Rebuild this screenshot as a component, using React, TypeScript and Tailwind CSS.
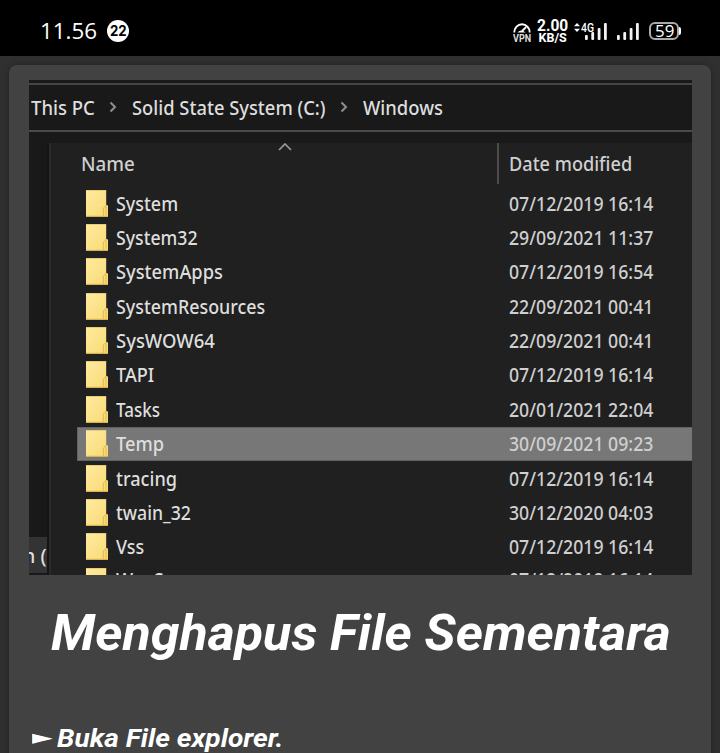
import { useLayoutEffect, useRef, useState, type ReactNode } from "react";

type FitProps = { width: number; className?: string; children: ReactNode };

// Condenses or widens a single line of text so it fills the given width.
function Fit({ width, className = "", children }: FitProps) {
  const ref = useRef<HTMLSpanElement>(null);
  const [scale, setScale] = useState(1);
  useLayoutEffect(() => {
    if (ref.current) setScale(width / ref.current.offsetWidth);
  }, [width]);
  return (
    <span className={`block shrink-0 whitespace-nowrap ${className}`} style={{ width }}>
      <span ref={ref} className="inline-block origin-left" style={{ transform: `scaleX(${scale})` }}>
        {children}
      </span>
    </span>
  );
}

const rows = [
  { name: "System", width: 62, date: "07/12/2019 16:14" },
  { name: "System32", width: 82, date: "29/09/2021 11:37" },
  { name: "SystemApps", width: 107, date: "07/12/2019 16:54" },
  { name: "SystemResources", width: 149, date: "22/09/2021 00:41" },
  { name: "SysWOW64", width: 99, date: "22/09/2021 00:41" },
  { name: "TAPI", width: 38, date: "07/12/2019 16:14" },
  { name: "Tasks", width: 44, date: "20/01/2021 22:04" },
  { name: "Temp", width: 48, date: "30/09/2021 09:23", selected: true },
  { name: "tracing", width: 61, date: "07/12/2019 16:14" },
  { name: "twain_32", width: 75, date: "30/12/2020 04:03" },
  { name: "Vss", width: 28, date: "07/12/2019 16:14" },
  { name: "WaaS", width: 48, date: "07/12/2019 16:14" },
];

function Folder() {
  return (
    <svg viewBox="0 0 22 27" className="h-[27px] w-[22px] shrink-0">
      <defs>
        <linearGradient id="folder" x1="0" y1="0" x2="1" y2="1">
          <stop offset="0" stopColor="#ffeba0" />
          <stop offset="1" stopColor="#f8d973" />
        </linearGradient>
      </defs>
      <path d="M0 0H20.2V15L22 15.5V27H0Z" fill="url(#folder)" />
      <path d="M0 .4H20" stroke="#e2c263" strokeWidth=".8" />
      <path d="M0 26.4H22" stroke="#d9b44c" strokeWidth="1.2" />
      <path d="M17.3 26V18L20 15.5V25" fill="none" stroke="#dfb94f" strokeWidth="1" />
    </svg>
  );
}

function Chevron({ className }: { className: string }) {
  return (
    <svg viewBox="0 0 8 12" className={`h-3 w-2 shrink-0 ${className}`}>
      <path d="M1.5 1.5L6 6L1.5 10.5" fill="none" stroke="#8c8c8c" strokeWidth="2.1" />
    </svg>
  );
}

function Signal() {
  return (
    <svg viewBox="0 0 22 18" className="h-[18px] w-[22px] shrink-0" fill="#f2f2f2">
      <rect x="0" y="12" width="2.8" height="5" rx="1" />
      <rect x="6.3" y="9" width="2.8" height="8" rx="1" />
      <rect x="12.7" y="5" width="2.8" height="12" rx="1" />
      <rect x="19" y="0" width="2.8" height="17" rx="1" />
    </svg>
  );
}

function StatusBar() {
  return (
    <header className="flex h-14 shrink-0 bg-black font-['Inter',sans-serif] text-white">
      <Fit width={57} className="ml-10 mt-4 h-7 font-['Open_Sans',sans-serif] text-[22px] leading-7">11.56</Fit>
      <div className="ml-[10px] mt-5 flex size-[22px] items-center justify-center rounded-full bg-white">
        <Fit width={17} className="text-[14px] font-bold leading-[22px] text-black">22</Fit>
      </div>
      <div className="ml-[384px] mt-[23px] w-[18px]">
        <svg viewBox="0 0 18 10" className="block h-[10px] w-[18px]">
          <path d="M1.3 9.5A7.7 8.2 0 0 1 16.7 9.5" fill="none" stroke="#fff" strokeWidth="1.9" />
          <path d="M13.2 4L9 8" stroke="#fff" strokeWidth="1.8" />
          <path d="M4.5 9.5Q8 5.5 12.5 9.5Z" fill="#fff" />
        </svg>
        <Fit width={18} className="mt-px font-['Roboto',sans-serif] text-[10px] font-bold leading-[9px] text-[#ddd]">VPN</Fit>
      </div>
      <div className="ml-[6px] mt-[19px] flex flex-col items-center font-['Roboto',sans-serif] font-bold">
        <Fit width={31} className="h-[13px] text-[16px] leading-[14px]">2.00</Fit>
        <Fit width={28} className="h-[11px] text-[12.5px] leading-[11px]">KB/S</Fit>
      </div>
      <div className="ml-[6px] mt-[23px] h-[18px] w-[34px]">
        <div className="relative flex">
          <svg viewBox="0 0 6 9" className="h-[9px] w-[6px]" fill="#fff">
            <path d="M3 0L6 3.3H0ZM3 9L0 5.7H6Z" />
          </svg>
          <Fit width={13} className="ml-px font-['Roboto',sans-serif] text-[12px] font-medium leading-[10px]">4G</Fit>
          <div className="absolute left-[11px] top-0"><Signal /></div>
        </div>
      </div>
      <div className="ml-[9px] mt-[23px]"><Signal /></div>
      <div className="ml-[10px] mt-[22px] flex h-[18px] items-center">
        <div className="flex h-[18px] w-[30px] items-center justify-center rounded-[6px] border-2 border-[#aaaaaa]">
          <Fit width={19} className="font-['Open_Sans',sans-serif] text-[16px] leading-[14px]">59</Fit>
        </div>
        <div className="h-2 w-[2px] rounded-r-full bg-white" />
      </div>
    </header>
  );
}

function Explorer() {
  return (
    <section className="flex h-[495px] w-[663px] flex-col overflow-hidden bg-[#191919] font-['Noto_Sans',sans-serif] text-[20.5px] font-medium leading-[30px] text-[#dedede]">
      <div className="mt-[3px] h-[2px] shrink-0 bg-[#454545]" />
      <nav className="flex h-[45px] shrink-0 items-center pb-px pl-[2px]">
        <Fit width={64}>This PC</Fit>
        <Chevron className="ml-[14px]" />
        <Fit width={194} className="ml-[15px]">Solid State System (C:)</Fit>
        <Chevron className="ml-[14px]" />
        <Fit width={80} className="ml-[15px]">Windows</Fit>
      </nav>
      <div className="h-[2px] shrink-0 bg-[#4a4a4a]" />
      <div className="mt-[11px] flex min-h-0 flex-1">
        <aside className="-mt-[11px] flex w-[18px] shrink-0 flex-col justify-end">
          <div className="mb-[2px] flex h-9 items-center justify-end overflow-hidden bg-[#333333]">
            <Fit width={24}>n (</Fit>
          </div>
        </aside>
        <div className="w-[2px] bg-[#151515]" />
        <div className="w-[2px] bg-[#2a2a2a]" />
        <div className="flex flex-1 flex-col bg-[#202020]">
          <div className="flex h-[43.5px] shrink-0 text-[#cfcfcf]">
            <Fit width={54} className="ml-[30px] mt-[5px]">Name</Fit>
            <svg viewBox="0 0 14 8" className="ml-[143px] h-2 w-[14px]">
              <path d="M1 7L7 1L13 7" fill="none" stroke="#999" strokeWidth="1.7" />
            </svg>
            <div className="ml-[205px] h-[41px] w-[2px] bg-[#4c4c4c]" />
            <Fit width={123} className="ml-[10px] mt-[5px]">Date modified</Fit>
          </div>
          {rows.map((row, i) => (
            <div
              key={row.name}
              className={`ml-[26px] flex h-[34.36px] shrink-0 items-center border-y border-l pb-px pl-2 ${
                row.selected ? "border-[#626262] bg-[#777777]" : "border-transparent"
              }`}
            >
              <Folder />
              <Fit width={row.width} className={`ml-2 ${i === rows.length - 1 ? "-mt-1" : "-mt-px"}`}>
                {row.name}
              </Fit>
              <Fit
                width={144}
                className={`ml-auto mr-[39px] text-[#cfcfcf] ${i === rows.length - 1 ? "-mt-1" : "-mt-px"}`}
              >
                {row.date}
              </Fit>
            </div>
          ))}
        </div>
      </div>
    </section>
  );
}

export default function App() {
  return (
    <div className="flex h-[753px] w-[720px] flex-col overflow-hidden bg-[#303030]">
      <StatusBar />
      <main className="ml-[9px] mt-[9px] h-[700px] w-[702px] shrink-0 rounded-lg bg-[#424242] pl-5 pt-[15px] font-['Roboto',sans-serif] font-bold italic text-white shadow-[0_0_5px_#202020]">
        <div className="font-normal not-italic">
          <Explorer />
        </div>
        <h1 className="ml-[22px] mt-[25px] text-[50px] leading-[66px]">
          <Fit width={620}>Menghapus File Sementara</Fit>
        </h1>
        <p className="mt-[54px] flex text-[26px] leading-9">
          <Fit width={20} className="-mt-px ml-[3px] font-['DejaVu_Sans',sans-serif] text-[20px] font-normal not-italic">►</Fit>
          <Fit width={227} className="ml-[5px]">Buka File explorer.</Fit>
        </p>
      </main>
    </div>
  );
}
